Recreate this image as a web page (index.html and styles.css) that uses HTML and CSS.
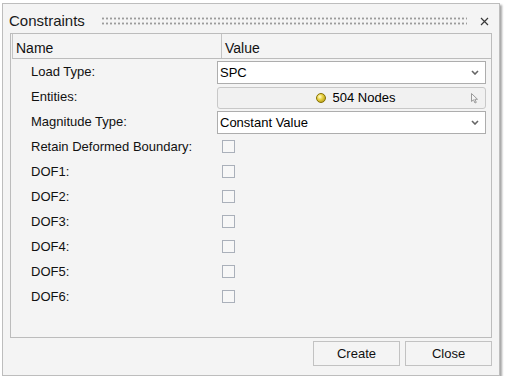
FILE: index.html
```html
<!DOCTYPE html>
<html lang="en">
<head>
  <meta charset="UTF-8" />
  <title>Constraints</title>
  <link rel="stylesheet" href="styles.css">
</head>
<body>
  <div class="dialog">
    <div class="titlebar">
      <span class="title">Constraints</span>
      <span class="grip"></span>
      <svg class="close-x" width="9" height="9" viewBox="0 0 9 9">
        <path d="M1 1 L8 8 M8 1 L1 8" stroke="#3a3a3a" stroke-width="1.2" fill="none"/>
      </svg>
    </div>

    <div class="panel">
      <div class="panel-head">
        <div class="head-cell head-name">Name</div>
        <div class="head-cell head-value">Value</div>
      </div>

      <div class="row">
        <div class="label">Load Type:</div>
        <div class="value">
          <div class="combo">
            <span>SPC</span>
            <svg class="chev" width="8" height="5" viewBox="0 0 8 5"><path d="M1 1 L4 4 L7 1" stroke="#666" stroke-width="1.6" fill="none"/></svg>
          </div>
        </div>
      </div>

      <div class="row">
        <div class="label">Entities:</div>
        <div class="value">
          <div class="picker">
            <span class="ball"></span>
            <span>504 Nodes</span>
            <svg class="cursor" width="8" height="11" viewBox="0 0 8 11"><path d="M0.5 0.5 L0.5 8.5 L2.5 6.8 L4 10 L5.3 9.4 L3.9 6.3 L6.5 6.3 Z" stroke="#9a9a9a" stroke-width="1" fill="#f4f4f4"/></svg>
          </div>
        </div>
      </div>

      <div class="row">
        <div class="label">Magnitude Type:</div>
        <div class="value">
          <div class="combo">
            <span>Constant Value</span>
            <svg class="chev" width="8" height="5" viewBox="0 0 8 5"><path d="M1 1 L4 4 L7 1" stroke="#666" stroke-width="1.6" fill="none"/></svg>
          </div>
        </div>
      </div>

      <div class="row">
        <div class="label">Retain Deformed Boundary:</div>
        <div class="value"><span class="check"></span></div>
      </div>
      <div class="row">
        <div class="label">DOF1:</div>
        <div class="value"><span class="check"></span></div>
      </div>
      <div class="row">
        <div class="label">DOF2:</div>
        <div class="value"><span class="check"></span></div>
      </div>
      <div class="row">
        <div class="label">DOF3:</div>
        <div class="value"><span class="check"></span></div>
      </div>
      <div class="row">
        <div class="label">DOF4:</div>
        <div class="value"><span class="check"></span></div>
      </div>
      <div class="row">
        <div class="label">DOF5:</div>
        <div class="value"><span class="check"></span></div>
      </div>
      <div class="row">
        <div class="label">DOF6:</div>
        <div class="value"><span class="check"></span></div>
      </div>
    </div>

    <div class="actions">
      <button class="btn">Create</button>
      <button class="btn">Close</button>
    </div>
  </div>
</body>
</html>
```

FILE: styles.css
```css
body {
  margin: 0;
  background: #ffffff;
  font-family: 'Liberation Sans', Arial, sans-serif;
  font-size: 13px;
  color: #111;
}

.dialog {
  margin: 3px 0 0 2px;
  width: 498px;
  height: 373px;
  box-sizing: border-box;
  background: #f4f4f4;
  border: 1px solid #bdbdbd;
  box-shadow: 2px 2px 2px rgba(0,0,0,0.35);
}

/* title bar */
.titlebar {
  height: 29px;
  box-sizing: border-box;
  padding: 8px 0 0 6px;
  display: flex;
  align-items: flex-start;
}

.title {
  font-size: 15px;
  line-height: 18px;
  color: #1a1a1a;
}

.grip {
  flex: 1;
  height: 9px;
  margin: 5px 0 0 16px;
  background-image: radial-gradient(circle, #9c9c9c 1px, transparent 1.2px);
  background-size: 4px 5px;
  background-position: 0 -1px;
}

.close-x {
  margin: 5px 10px 0 13px;
}

/* property panel */
.panel {
  margin: 0 7px;
  height: 305px;
  box-sizing: border-box;
  border: 1px solid #bcbcbc;
}

.panel-head {
  display: flex;
  height: 25px;
  box-sizing: border-box;
  margin-left: 1px;
  border-left: 1px solid #c4c4c4;
  border-bottom: 1px solid #bcbcbc;
}

.head-cell {
  font-size: 14px;
  line-height: 17px;
  padding: 6px 0 0 3px;
}

.head-name {
  width: 205px;
  border-right: 1px solid #c4c4c4;
}

.row {
  display: flex;
  align-items: center;
  height: 25px;
}

.label {
  width: 206px;
  padding-left: 20px;
  box-sizing: border-box;
}

.value {
  width: 269px;
  display: flex;
  align-items: center;
}

.combo {
  flex: 1;
  height: 23px;
  box-sizing: border-box;
  margin-top: 1px;
  background: #fff;
  border: 1px solid #adadad;
  display: flex;
  align-items: center;
  justify-content: space-between;
  padding: 0 6px 0 2px;
  color: #000;
}

.picker {
  flex: 1;
  height: 22px;
  box-sizing: border-box;
  margin-top: 2px;
  background: #f1f1f1;
  border: 1px solid #c8c8c8;
  border-radius: 3px;
  display: flex;
  align-items: center;
  justify-content: center;
  gap: 7px;
  position: relative;
  padding-left: 8px;
  color: #000;
}

.ball {
  width: 8px;
  height: 8px;
  border-radius: 50%;
  background: radial-gradient(circle at 35% 35%, #fffbd0 0, #e8d040 40%, #a08a10 100%);
  border: 0.5px solid #857000;
}

.cursor {
  position: absolute;
  right: 6px;
  top: 5px;
}

.check {
  width: 13px;
  height: 13px;
  box-sizing: border-box;
  margin-left: 5px;
  border: 1px solid #aab0ba;
  background: #f7f7f7;
}

/* buttons */
.actions {
  display: flex;
  justify-content: flex-end;
  gap: 5px;
  margin: 3px 7px 0 0;
}

.btn {
  width: 87px;
  height: 25px;
  background: #f4f4f4;
  border: 1px solid #c2c2c2;
  font-family: 'Liberation Sans', Arial, sans-serif;
  font-size: 13px;
  color: #111;
  padding: 0;
}
```
